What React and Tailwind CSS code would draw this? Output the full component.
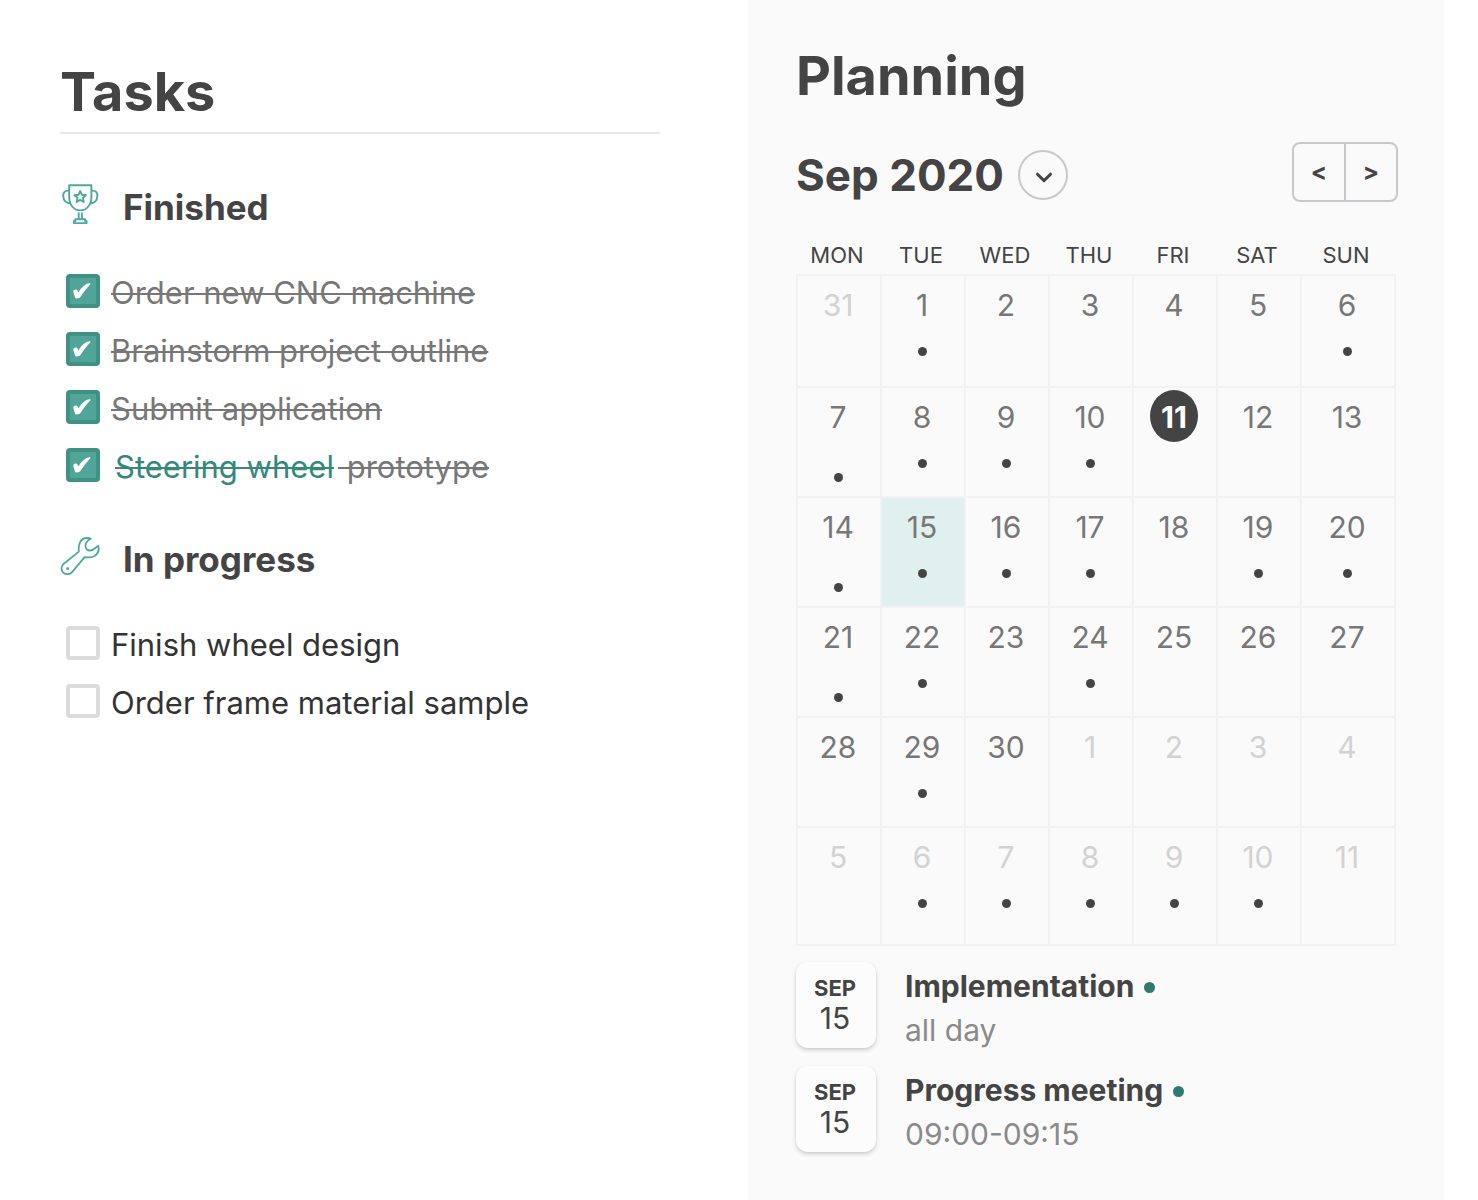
import React, { useState } from "react";

const WEEKDAYS = ["Mon", "Tue", "Wed", "Thu", "Fri", "Sat", "Sun"];

const WEEKS = [
  { start: 31, dots: [1, 6], height: "h-[112px]" },
  { start: 7, dots: [0, 1, 2, 3], height: "h-[110px]" },
  { start: 14, dots: [0, 1, 2, 3, 5, 6], height: "h-[110px]" },
  { start: 21, dots: [0, 1, 3], height: "h-[110px]" },
  { start: 28, dots: [1], height: "h-[110px]" },
  { start: 5, dots: [1, 2, 3, 4, 5], height: "h-[118px]" },
];

const EVENTS = [
  { title: "Implementation", time: "all day" },
  { title: "Progress meeting", time: "09:00-09:15" },
];

const INITIAL_TASKS = [
  { id: 1, text: "Order new CNC machine", group: "finished", done: true },
  { id: 2, text: "Brainstorm project outline", group: "finished", done: true },
  { id: 3, text: "Submit application", group: "finished", done: true },
  { id: 4, link: "Steering wheel", text: " prototype", group: "finished", done: true },
  { id: 5, text: "Finish wheel design", group: "progress", done: false },
  { id: 6, text: "Order frame material sample", group: "progress", done: false },
];

/** --------------------------
 * Icons
 * -------------------------- */
const TrophyIcon = () => (
  <svg
    width="40"
    height="40"
    viewBox="0 0 40 40"
    fill="none"
    stroke="#4fa89d"
    strokeWidth="1.9"
    strokeLinejoin="round"
    aria-hidden="true"
  >
    <path d="M9.2 1.2H31.4V13C31.4 20.5 27 26.4 20.3 26.4S9.2 20.5 9.2 13Z" />
    <path d="M9.2 6.600H8C4.700 6.600 3 9 3.200 12C3.500 16.500 6.500 19.300 10.800 19.500" />
    <path d="M31.400 6.600H32.600C35.900 6.600 37.600 9 37.400 12C37.100 16.500 34.100 19.300 29.800 19.500" />
    <path d="M20.200 7L21.900 10.800L26 11.200L22.900 13.900L23.800 18L20.200 15.900L16.600 18L17.500 13.900L14.400 11.200L18.500 10.800Z" />
    <path d="M18.700 28.500V35M21.900 28.500V35" />
    <path d="M15.400 35.200H25.200V37H26.600V39.100H13.900V37H15.400Z" />
  </svg>
);

const WrenchIcon = () => (
  <svg
    width="40"
    height="40"
    viewBox="0 0 40 40"
    fill="none"
    stroke="#4fa89d"
    strokeWidth="1.8"
    strokeLinejoin="round"
    aria-hidden="true"
  >
    <path d="M18.800 15.600C18.200 9.500 19.600 2 27 2C28.600 2 30 2.200 30.800 2.800C27.400 4.600 25.300 7 25.500 9.800C25.500 13.200 27.500 14.700 30.600 14.500C33.800 14.200 35.600 11.600 38.200 9.800C39.300 13.500 38.300 17.300 35.300 19.600C32.300 22 28.200 21.400 24.600 21.200L12.300 35.800C9.800 38.700 5.800 39 3.200 36.600C0.600 34 1 30.200 3.800 27.700Z" />
    <circle cx="7.600" cy="32.400" r="1.500" fill="#4fa89d" stroke="none" />
  </svg>
);

const CheckMark = () => (
  <svg
    className="pointer-events-none absolute inset-0"
    width="34"
    height="34"
    viewBox="0 0 34 34"
    fill="#ffffff"
    aria-hidden="true"
  >
    <path d="M7.300 17.600C7.300 15.200 11.300 14.800 11.900 17.200C12 17.900 12.200 18.300 12.500 18.300C14.800 14.500 17.600 11.300 21 9.800C22.200 9.300 23.600 9.100 24.300 9.400C24.600 9.700 24.500 10.100 24.100 10.600C20.600 14.400 17.300 18.600 14.400 23.100C13.600 24.200 12.400 24.500 11 24.500C9.700 24.500 9.200 24.100 8.900 23C8.500 21.100 7.400 19.400 7.300 17.600Z" />
  </svg>
);

/** --------------------------
 * Tasks
 * -------------------------- */
const TaskItem = ({ task, onToggle }) => (
  <li className="flex h-[58px] items-center pl-1.5">
    <span className="relative size-[34px] shrink-0">
      <input
        id={`task-${task.id}`}
        type="checkbox"
        checked={task.done}
        onChange={() => onToggle(task.id)}
        className="block size-[34px] appearance-none rounded-sm border-4 border-[#dcdcdc] bg-white checked:border-[#3f9184] checked:bg-[#50a598]"
      />
      {task.done && <CheckMark />}
    </span>
    <label
      htmlFor={`task-${task.id}`}
      className={`pt-1 pl-[11px] text-[31px] leading-10 ${
        task.done ? "text-[#777777] line-through decoration-2" : "text-[#333333]"
      }`}
    >
      {task.link && (
        <a href="#steering-wheel" className="mx-1 inline-block text-[#34897a] line-through decoration-2">
          {task.link}
        </a>
      )}
      {task.text}
    </label>
  </li>
);

const TaskGroup = ({ icon, title, tasks, onToggle }) => (
  <section>
    <h2 className="mb-[30px] flex h-12 items-start text-[35px] leading-[46px] font-bold">
      {icon}
      <span className="pl-[23px]">{title}</span>
    </h2>
    <ul>
      {tasks.map((task) => (
        <TaskItem key={task.id} task={task} onToggle={onToggle} />
      ))}
    </ul>
  </section>
);

/** --------------------------
 * Calendar
 * -------------------------- */
const buildWeek = (week, row) =>
  WEEKDAYS.map((_, col) => {
    let day = week.start + col;
    if (row === 0 && col > 0) day = col;
    if (row === 4 && day > 30) day = day - 30;
    const outside = (row === 0 && col === 0) || (row === 4 && col > 2) || row === 5;
    return { day, outside, dot: week.dots.includes(col), late: col === 0 };
  });

const DayCell = ({ cell, selected, today, onSelect }) => {
  let color = "text-[#777777]";
  if (cell.outside) color = "text-[#d2d2d2]";
  if (today) color = "bg-[#444444] font-bold text-white";

  return (
    <td className={`border-2 border-[#f2f2f3] p-0 align-top ${selected ? "bg-[#e0f0ee]" : ""}`}>
      <button type="button" onClick={onSelect} className="flex w-full flex-col items-center pt-0.5 pr-0.5">
        <span className={`flex h-[52px] w-12 items-center justify-center rounded-[50%] pt-0.5 text-[30px] ${color}`}>
          {cell.day}
        </span>
        {cell.dot && (
          <span className={`size-[9px] rounded-full bg-[#444444] ${cell.late ? "mt-[31px]" : "mt-[17px]"}`} />
        )}
      </button>
    </td>
  );
};

const Calendar = () => {
  const [selected, setSelected] = useState("2-1");

  return (
    <table className="w-full table-fixed border-collapse">
      <colgroup>
        <col span={6} className="w-[84px]" />
        <col className="w-[94px]" />
      </colgroup>
      <thead>
        <tr className="h-[39px]">
          {WEEKDAYS.map((name) => (
            <th key={name} scope="col" className="p-0 pr-1 text-[22px] font-normal uppercase">
              {name}
            </th>
          ))}
        </tr>
      </thead>
      <tbody>
        {WEEKS.map((week, row) => (
          <tr key={row} className={week.height}>
            {buildWeek(week, row).map((cell, col) => (
              <DayCell
                key={col}
                cell={{ ...cell, late: cell.late && row > 0 }}
                selected={selected === `${row}-${col}`}
                today={row === 1 && cell.day === 11}
                onSelect={() => setSelected(`${row}-${col}`)}
              />
            ))}
          </tr>
        ))}
      </tbody>
    </table>
  );
};

const EventItem = ({ event }) => (
  <li className="flex">
    <div className="flex h-[86px] w-20 shrink-0 flex-col items-center justify-center rounded-xl bg-[#fcfcfc] pr-0.5 pb-1 shadow-[0_2px_4px_rgba(0,0,0,0.2)]">
      <span className="text-[22px] leading-[30px] font-bold">SEP</span>
      <span className="text-[30px] leading-[30px]">15</span>
    </div>
    <div className="pt-0.5 pl-[29px] text-[30px] leading-[44px]">
      <p className="flex items-center gap-2.5 font-bold">
        {event.title}
        <span className="mt-0.5 size-[11px] rounded-full bg-[#2f7a6e]" />
      </p>
      <p className="text-[#8a8a8a]">{event.time}</p>
    </div>
  </li>
);

const App = () => {
  const [tasks, setTasks] = useState(INITIAL_TASKS);

  const toggleTask = (id) => {
    setTasks((prev) => prev.map((t) => (t.id === id ? { ...t, done: !t.done } : t)));
  };

  return (
    <main className="grid min-h-screen grid-cols-[748fr_696fr] bg-white pr-[34px] font-['Inter',sans-serif] text-[#444444]">
      {/* Tasks */}
      <div className="pt-[60px] pr-[88px] pl-[60px]">
        <h1 className="mb-[50px] border-b-2 border-[#e8e8e8] pb-2 text-[54px] leading-[64px] font-bold">Tasks</h1>
        <div className="flex flex-col gap-[42px]">
          <TaskGroup
            icon={<TrophyIcon />}
            title="Finished"
            tasks={tasks.filter((t) => t.group === "finished")}
            onToggle={toggleTask}
          />
          <TaskGroup
            icon={<WrenchIcon />}
            title="In progress"
            tasks={tasks.filter((t) => t.group === "progress")}
            onToggle={toggleTask}
          />
        </div>
      </div>

      {/* Planning */}
      <div className="bg-[#fafafa] pt-11 pr-[46px] pl-12">
        <h1 className="text-[54px] leading-[64px] font-bold">Planning</h1>
        <div className="mt-[34px] flex items-start justify-between">
          <div className="flex items-center gap-3.5 pt-2">
            <h2 className="text-[44px] leading-[50px] font-bold">Sep 2020</h2>
            <button
              type="button"
              aria-label="Choose month"
              className="flex size-[50px] items-center justify-center rounded-full border-2 border-[#c8c8cc]"
            >
              <svg
                width="20"
                height="20"
                viewBox="0 0 20 20"
                fill="none"
                stroke="#444444"
                strokeWidth="3"
                strokeLinecap="round"
                strokeLinejoin="round"
                aria-hidden="true"
              >
                <path d="M4.500 9.200L11 15.600L17.500 9.200" />
              </svg>
            </button>
          </div>
          <div className="flex h-[60px] w-[106px] divide-x-2 divide-[#c8c8cc] rounded-lg border-2 border-[#c8c8cc] text-2xl font-bold">
            <button type="button" aria-label="Previous month" className="flex-1">
              &lt;
            </button>
            <button type="button" aria-label="Next month" className="flex-1">
              &gt;
            </button>
          </div>
        </div>
        <div className="mt-[34px] pr-0.5">
          <Calendar />
        </div>
        <ul className="mt-4 flex flex-col gap-3.5">
          {EVENTS.map((event) => (
            <EventItem key={event.title} event={event} />
          ))}
        </ul>
      </div>
    </main>
  );
};

export default App;
